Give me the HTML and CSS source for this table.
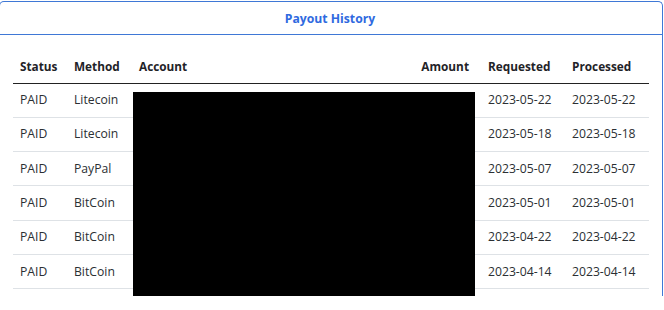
FILE: index.html
```html
<!DOCTYPE html>
<html lang="en">
<head>
<meta charset="utf-8">
<title>Payout History</title>
<link rel="stylesheet" href="styles.css">
</head>
<body>
<section class="card">
  <header class="card-header">Payout History</header>
  <div class="card-body">
    <table class="payouts">
      <colgroup>
        <col class="c-status"><col class="c-method"><col class="c-account"><col class="c-amount"><col class="c-date"><col class="c-date">
      </colgroup>
      <thead>
        <tr><th>Status</th><th>Method</th><th>Account</th><th class="num">Amount</th><th>Requested</th><th>Processed</th></tr>
      </thead>
      <tbody>
        <tr><td>PAID</td><td>Litecoin</td><td></td><td class="num"></td><td>2023-05-22</td><td>2023-05-22</td></tr>
        <tr><td>PAID</td><td>Litecoin</td><td></td><td class="num"></td><td>2023-05-18</td><td>2023-05-18</td></tr>
        <tr><td>PAID</td><td>PayPal</td><td></td><td class="num"></td><td>2023-05-07</td><td>2023-05-07</td></tr>
        <tr><td>PAID</td><td>BitCoin</td><td></td><td class="num"></td><td>2023-05-01</td><td>2023-05-01</td></tr>
        <tr><td>PAID</td><td>BitCoin</td><td></td><td class="num"></td><td>2023-04-22</td><td>2023-04-22</td></tr>
        <tr><td>PAID</td><td>BitCoin</td><td></td><td class="num"></td><td>2023-04-14</td><td>2023-04-14</td></tr>
      </tbody>
    </table>
    <div class="redaction"></div>
  </div>
</section>
</body>
</html>
```
FILE: styles.css
```css
html, body {
  margin: 0;
  padding: 0;
  background: #ffffff;
}
body {
  font-family: "Open Sans", "Noto Sans", Arial, sans-serif;
  color: #212529;
  padding-top: 1px;
  overflow: hidden;
}
.card {
  position: relative;
  width: 664px;
  box-sizing: border-box;
  margin-left: -1px;
  border: 1px solid #3f78d6;
  border-bottom: 0;
  border-radius: 5px 5px 0 0;
  background: #fff;
}
.card-header {
  height: 32px;
  border-bottom: 1px solid #3f78d6;
  display: flex;
  align-items: center;
  justify-content: center;
  font-weight: 700;
  font-size: 12.2px;
  color: #2f6ae0;
  padding-right: 2px;
}
.card-body {
  padding: 14px 13px 7px 13px;
}
.payouts {
  width: 636px;
  border-collapse: collapse;
  table-layout: fixed;
  font-size: 12.2px;
}
.c-status { width: 54px; }
.c-method { width: 65px; }
.c-account { width: 279px; }
.c-amount { width: 70px; }
.c-date { width: 84px; }
.payouts th,
.payouts td {
  text-align: left;
  padding: 0 7px;
  white-space: nowrap;
}
.payouts th {
  height: 34px;
  font-weight: 700;
  font-size: 11.8px;
  color: #1f2328;
  border-bottom: 1px solid #222;
  box-sizing: border-box;
  padding-top: 1px;
}
.payouts td {
  height: 33.3px;
  line-height: 18px;
  color: #2b2f33;
  border-bottom: 1px solid #dee2e6;
}
.payouts .num {
  text-align: right;
  padding-right: 12px;
}
.redaction {
  position: absolute;
  left: 133px;
  top: 90px;
  width: 342px;
  height: 205px;
  background: #000;
}
```
